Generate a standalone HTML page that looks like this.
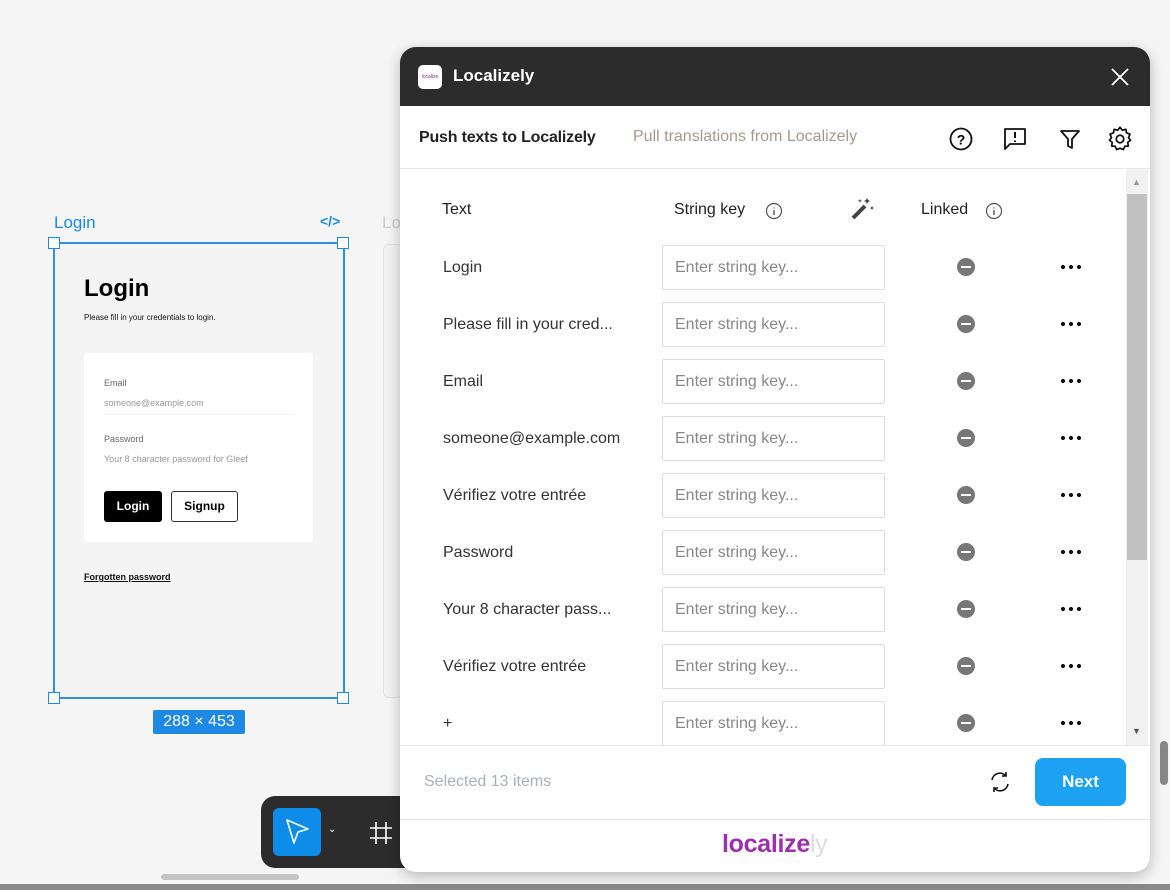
<!DOCTYPE html><html><head><style>
*{box-sizing:border-box;margin:0;padding:0}
body{width:1170px;height:890px;background:#f5f5f5;font-family:"Liberation Sans",sans-serif;position:relative;overflow:hidden}
.a{position:absolute}
.row{position:absolute;left:400px;width:726px;height:57px}
.row .t{position:absolute;left:43px;top:14px;font-size:16px;color:#333}
.row .in{position:absolute;left:262px;top:0;width:223px;height:45px;border:1px solid #ddd;border-radius:2px;padding:13px 12px;font-size:16px;color:#888}
.row .m{position:absolute;left:557px;top:13px;width:18px;height:18px;border-radius:50%;background:#777}
.row .m:after{content:"";position:absolute;left:4px;top:8px;width:10px;height:2px;background:#fff}
.row .d{position:absolute;left:659px;top:20px;width:24px;height:4px;background:radial-gradient(circle,#111 1.9px,transparent 2.2px) 0 0/8px 4px repeat-x}
</style></head><body>
<div class="a" style="left:54px;top:213px;color:#1e88e5;font-size:17px">Login</div>
<div class="a" style="left:320px;top:213px;color:#1e88e5;font-size:14px;font-weight:bold">&lt;/&gt;</div>
<div class="a" style="left:382px;top:213px;color:#ccc;font-size:17px">Lo</div>
<div class="a" style="left:383px;top:244px;width:20px;height:454px;border:1px solid #e2e2e2;border-radius:6px;background:#f2f2f2"></div>
<div class="a" style="left:53px;top:242px;width:292px;height:457px;border:2px solid #2b8fe6;background:#f4f4f4"></div>
<div class="a" style="left:48px;top:237px;width:12px;height:12px;border:1.5px solid #1e88e5;background:#fff"></div>
<div class="a" style="left:337px;top:237px;width:12px;height:12px;border:1.5px solid #1e88e5;background:#fff"></div>
<div class="a" style="left:48px;top:692px;width:12px;height:12px;border:1.5px solid #1e88e5;background:#fff"></div>
<div class="a" style="left:337px;top:692px;width:12px;height:12px;border:1.5px solid #1e88e5;background:#fff"></div>
<div class="a" style="left:84px;top:275px;font-size:24px;font-weight:bold;color:#000">Login</div>
<div class="a" style="left:84px;top:313px;font-size:8px;color:#111">Please fill in your credentials to login.</div>
<div class="a" style="left:84px;top:353px;width:229px;height:189px;background:#fff;border-radius:4px"></div>
<div class="a" style="left:104px;top:378px;font-size:9px;color:#666">Email</div>
<div class="a" style="left:104px;top:398px;font-size:9px;color:#999">someone@example.com</div>
<div class="a" style="left:104px;top:414px;width:190px;height:1px;background:#f0f0f0"></div>
<div class="a" style="left:104px;top:434px;font-size:9px;color:#666">Password</div>
<div class="a" style="left:104px;top:454px;font-size:9px;color:#999">Your 8 character password for Gleef</div>
<div class="a" style="left:104px;top:491px;width:58px;height:31px;background:#000;border-radius:3px;color:#fff;font-size:12px;font-weight:bold;text-align:center;line-height:31px">Login</div>
<div class="a" style="left:171px;top:491px;width:67px;height:31px;border:1.5px solid #333;border-radius:3px;color:#000;font-size:12px;font-weight:bold;text-align:center;line-height:28px">Signup</div>
<div class="a" style="left:84px;top:572px;font-size:9px;font-weight:bold;color:#111;text-decoration:underline">Forgotten password</div>
<div class="a" style="left:153px;top:710px;width:92px;height:24px;background:#1e88e5;border-radius:2px;color:#fff;font-size:16px;text-align:center;line-height:24px">288 × 453</div>
<div class="a" style="left:261px;top:796px;width:160px;height:72px;background:#2c2c2c;border-radius:14px"></div>
<div class="a" style="left:273px;top:808px;width:48px;height:48px;background:#0d8ce9;border-radius:6px"></div>
<svg class="a" style="left:284px;top:818px" width="28" height="28" viewBox="0 0 28 28"><path d="M3 2 L24 11 L14 14 L10 25 Z" fill="none" stroke="#fff" stroke-width="1.6" stroke-linejoin="round"/></svg>
<div class="a" style="left:328px;top:824px;color:#fff;font-size:10px">⌄</div>
<svg class="a" style="left:368px;top:820px" width="26" height="26"><path d="M8 2V24M18 2V24M2 8H24M2 18H24" stroke="#fff" stroke-width="1.6"/></svg>
<div class="a" style="left:161px;top:874px;width:138px;height:6px;background:#c4c4c4;border-radius:3px"></div>
<div class="a" style="left:0;top:884px;width:1170px;height:6px;background:#8a8a8a"></div>
<div class="a" style="left:1160px;top:741px;width:8px;height:44px;background:#888;border-radius:4px"></div>
<div class="a" style="left:400px;top:47px;width:750px;height:825px;background:#fff;border-radius:16px;overflow:hidden;box-shadow:0 4px 14px rgba(0,0,0,.25)">
<div class="a" style="left:0;top:0;width:750px;height:59px;background:#2c2c2c"></div>
<div class="a" style="left:18px;top:18px;width:24px;height:24px;background:#fff;border-radius:5px;font-size:5px;color:#7b2c95;text-align:center;line-height:24px">localize</div>
<div class="a" style="left:53px;top:19px;color:#fff;font-size:17px;font-weight:bold">Localizely</div>
<svg class="a" style="left:710px;top:20px" width="20" height="20"><path d="M2 2L18 18M18 2L2 18" stroke="#fff" stroke-width="1.8"/></svg>
<div class="a" style="left:19px;top:82px;font-size:16px;color:#222;font-weight:bold;letter-spacing:-0.2px">Push texts to Localizely</div>
<div class="a" style="left:233px;top:81px;font-size:16px;color:#a89a8a">Pull translations from Localizely</div>
<svg class="a" style="left:548px;top:79px" width="26" height="26"><circle cx="13" cy="13" r="10.5" fill="none" stroke="#111" stroke-width="1.8"/><text x="13" y="18.5" font-size="14" text-anchor="middle" font-family="Liberation Sans" font-weight="bold">?</text></svg>
<svg class="a" style="left:602px;top:79px" width="26" height="26"><path d="M3 3H23V18H8L3 23Z" fill="none" stroke="#111" stroke-width="1.8" stroke-linejoin="round"/><path d="M13 6V12M13 14.5V16" stroke="#111" stroke-width="2"/></svg>
<svg class="a" style="left:658px;top:80px" width="24" height="24"><path d="M3 4H21L14 12V21L10 19V12Z" fill="none" stroke="#111" stroke-width="1.8" stroke-linejoin="round"/></svg>
<svg class="a" style="left:706px;top:78px" width="28" height="28" viewBox="0 0 24 24"><path d="M12 2l2 2.5 3-.8.6 3 2.9 1.2-1.2 2.9L21 13l-2.4 2 .6 3-3 .2-1.3 2.8L12 20l-2.9 1-1.3-2.8-3-.2.6-3L3 13l1.7-2.2-1.2-2.9 2.9-1.2.6-3 3 .8z" fill="none" stroke="#111" stroke-width="1.5" stroke-linejoin="round"/><circle cx="12" cy="12" r="3.2" fill="none" stroke="#111" stroke-width="1.5"/></svg>
<div class="a" style="left:0;top:121px;width:750px;height:1px;background:#e8e8e8"></div>
<div class="a" style="left:726px;top:122px;width:22px;height:576px;background:#f1f1f1"></div>
<div class="a" style="left:727px;top:147px;width:20px;height:366px;background:#c1c1c1"></div>
<div class="a" style="left:732px;top:130px;font-size:9px;color:#999">▲</div>
<div class="a" style="left:732px;top:679px;font-size:9px;color:#555">▼</div>
<div class="a" style="left:42px;top:154px;font-size:16px;color:#222">Text</div>
<div class="a" style="left:274px;top:154px;font-size:16px;color:#222">String key</div>
<svg class="a" style="left:365px;top:155px" width="18" height="18"><circle cx="9" cy="9" r="7.5" fill="none" stroke="#555" stroke-width="1.2"/><path d="M9 8V13M9 5.5V6.5" stroke="#555" stroke-width="1.4"/></svg>
<svg class="a" style="left:450px;top:149px" width="26" height="26"><path d="M3 22L15 10" stroke="#444" stroke-width="4"/><path d="M17 2l1 2 2 1-2 1-1 2-1-2-2-1 2-1zM22 10l.7 1.4 1.3.6-1.3.6-.7 1.4-.7-1.4-1.3-.6 1.3-.6zM10 3l.6 1.2 1.2.6-1.2.6-.6 1.2-.6-1.2-1.2-.6 1.2-.6z" fill="#444"/></svg>
<div class="a" style="left:521px;top:154px;font-size:16px;color:#222">Linked</div>
<svg class="a" style="left:585px;top:155px" width="18" height="18"><circle cx="9" cy="9" r="7.5" fill="none" stroke="#555" stroke-width="1.2"/><path d="M9 8V13M9 5.5V6.5" stroke="#555" stroke-width="1.4"/></svg>
<div class="a" style="left:0;top:698px;width:750px;height:1px;background:#e8e8e8"></div>
<div class="a" style="left:24px;top:726px;font-size:16px;color:#aab0b8">Selected 13 items</div>
<svg class="a" style="left:588px;top:723px" width="24" height="24" viewBox="0 0 24 24"><path d="M4 10a8 8 0 0 1 14-4M20 14a8 8 0 0 1-14 4" fill="none" stroke="#111" stroke-width="1.6"/><path d="M18 2v4h-4M6 22v-4h4" fill="none" stroke="#111" stroke-width="1.6"/></svg>
<div class="a" style="left:635px;top:711px;width:91px;height:48px;background:#1da1f2;border-radius:8px;color:#fff;font-size:17px;font-weight:bold;text-align:center;line-height:48px">Next</div>
<div class="a" style="left:0;top:772px;width:750px;height:1px;background:#e8e8e8"></div>
<div class="a" style="left:322px;top:783px;font-size:25px;color:#9b2fae;font-family:'Liberation Sans',sans-serif;font-weight:bold;letter-spacing:-0.3px">localize<span style="color:#ddd;font-weight:normal">ly</span></div>
</div>
<div class="row" style="top:245px"><div class="t">Login</div><div class="in">Enter string key...</div><div class="m"></div><div class="d"></div></div>
<div class="row" style="top:302px"><div class="t">Please fill in your cred...</div><div class="in">Enter string key...</div><div class="m"></div><div class="d"></div></div>
<div class="row" style="top:359px"><div class="t">Email</div><div class="in">Enter string key...</div><div class="m"></div><div class="d"></div></div>
<div class="row" style="top:416px"><div class="t">someone@example.com</div><div class="in">Enter string key...</div><div class="m"></div><div class="d"></div></div>
<div class="row" style="top:473px"><div class="t">Vérifiez votre entrée</div><div class="in">Enter string key...</div><div class="m"></div><div class="d"></div></div>
<div class="row" style="top:530px"><div class="t">Password</div><div class="in">Enter string key...</div><div class="m"></div><div class="d"></div></div>
<div class="row" style="top:587px"><div class="t">Your 8 character pass...</div><div class="in">Enter string key...</div><div class="m"></div><div class="d"></div></div>
<div class="row" style="top:644px"><div class="t">Vérifiez votre entrée</div><div class="in">Enter string key...</div><div class="m"></div><div class="d"></div></div>
<div class="row" style="top:701px;height:44px;overflow:hidden"><div class="t">+</div><div class="in">Enter string key...</div><div class="m"></div><div class="d"></div></div>
</body></html>
